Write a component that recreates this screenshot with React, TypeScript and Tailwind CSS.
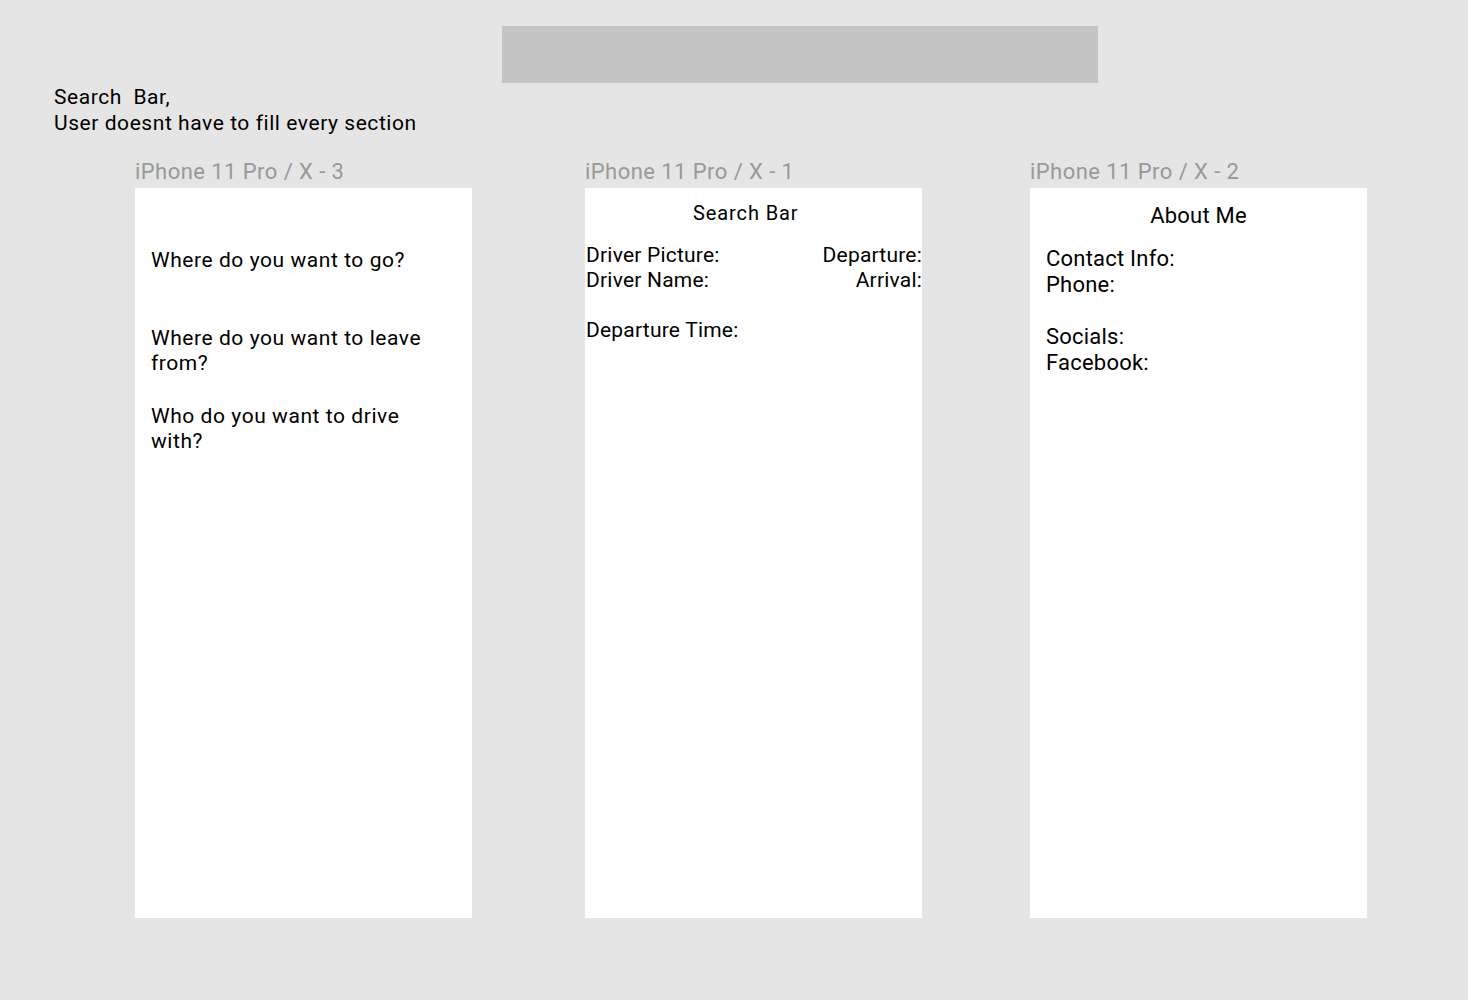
const font = "font-['Roboto',sans-serif] tracking-[0.035em]";

interface PhoneFrameProps {
  label: string;
  className?: string;
  children?: React.ReactNode;
}

const PhoneFrame: React.FC<PhoneFrameProps> = ({ label, className, children }) => {
  return (
    <div className={className}>
      {/* Frame name on canvas */}
      <div className="h-[28px] text-[22px] leading-[24px] tracking-[0.02em] text-[#999999] whitespace-nowrap">{label}</div>
      <div className="h-[730px] w-[337px] bg-white text-black">{children}</div>
    </div>
  );
};

export default function App() {
  return (
    <div className={`${font} h-[1000px] w-[1468px] overflow-hidden bg-[#e5e5e5] text-black`}>
      {/* Search bar placeholder */}
      <div className="ml-[502px] mt-[26px] h-[57px] w-[596px] bg-[#c4c4c4]" />

      {/* Note */}
      <div className="ml-[54px] mt-[1px] text-[21px] leading-[26px]">
        <div className="whitespace-pre">Search  Bar,</div>
        <div>User doesnt have to fill every section</div>
      </div>

      <div className="mt-[24px] flex">
        <PhoneFrame label="iPhone 11 Pro / X - 3" className="ml-[135px]">
          <div className="pl-[16px] pt-[60px] w-[300px] text-[21px] leading-[25px]">
            <div>Where do you want to go?</div>
            <div className="mt-[53px]">Where do you want to leave from?</div>
            <div className="mt-[28px]">Who do you want to drive with?</div>
          </div>
        </PhoneFrame>

        <PhoneFrame label="iPhone 11 Pro / X - 1" className="ml-[113px]">
          <div className="pt-[13px] text-[20px] leading-[24px]">
            <div className="ml-[108px] tracking-[0.045em]">Search Bar</div>
            <div className="mt-[18px] flex justify-between pl-[1px] text-[21px] leading-[25px] tracking-[0.01em]">
              <div>
                <div>Driver Picture:</div>
                <div>Driver Name:</div>
              </div>
              <div className="text-right">
                <div>Departure:</div>
                <div>Arrival:</div>
              </div>
            </div>
            <div className="mt-[25px] pl-[1px] text-[21px] leading-[25px] tracking-[0.01em]">Departure Time:</div>
          </div>
        </PhoneFrame>

        <PhoneFrame label="iPhone 11 Pro / X - 2" className="ml-[108px]">
          <div className="pt-[15px] text-[22px] leading-[26px] tracking-[0.01em]">
            <div className="text-center">About Me</div>
            <div className="mt-[17px] pl-[16px]">
              <div>Contact Info:</div>
              <div>Phone:</div>
              <div className="mt-[26px]">Socials:</div>
              <div>Facebook:</div>
            </div>
          </div>
        </PhoneFrame>
      </div>
    </div>
  );
}
